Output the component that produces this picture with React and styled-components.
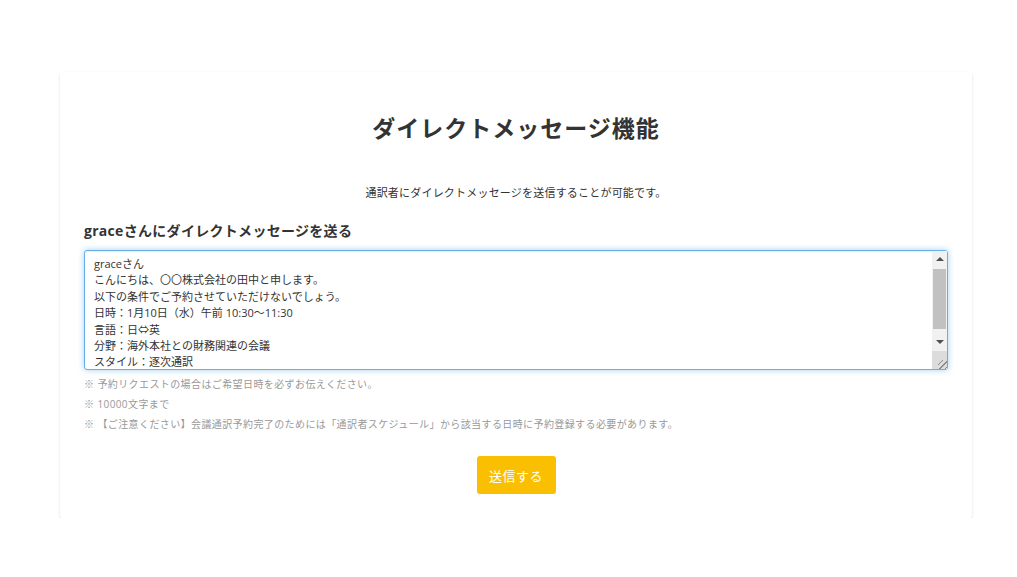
import styled, { createGlobalStyle } from "styled-components";

const GlobalStyle = createGlobalStyle`
  body {
    margin: 0;
    background: #fff;
    font-family: "Open Sans", "Noto Sans CJK JP", sans-serif;
    color: #333;
  }
`;

const message = `graceさん
こんにちは、〇〇株式会社の田中と申します。
以下の条件でご予約させていただけないでしょう。
日時：1月10日（水）午前 10:30〜11:30
言語：日⇔英
分野：海外本社との財務関連の会議
スタイル：逐次通訳
よろしくお願いいたします。

田中`;

const notes = [
  "※ 予約リクエストの場合はご希望日時を必ずお伝えください。",
  "※ 10000文字まで",
  "※ 【ご注意ください】会議通訳予約完了のためには「通訳者スケジュール」から該当する日時に予約登録する必要があります。",
];

const App = () => {
  return (
    <>
      <GlobalStyle />
      <Page>
        <Card>
          <Title>ダイレクトメッセージ機能</Title>
          <Lead>通訳者にダイレクトメッセージを送信することが可能です。</Lead>
          <Label>graceさんにダイレクトメッセージを送る</Label>
          <Field>
            <Message defaultValue={message} />
            {/* classic scrollbar drawn over the textarea */}
            <Scrollbar>
              <ArrowButton $dir="up" />
              <Track>
                <Thumb />
              </Track>
              <ArrowButton $dir="down" />
              <Grip />
            </Scrollbar>
          </Field>
          <Notes>
            {notes.map((n) => (
              <Note key={n}>{n}</Note>
            ))}
          </Notes>
          <Actions>
            <SendButton>送信する</SendButton>
          </Actions>
        </Card>
      </Page>
    </>
  );
};

const Page = styled.div`
  padding: 72px 45px 0 60px;
`;

const Card = styled.div`
  background: #fff;
  border-radius: 3px;
  box-shadow: 0 1px 3px rgba(0, 0, 0, 0.12);
  padding: 43px 24px 24px;
  display: flex;
  flex-direction: column;
`;

const Title = styled.h2`
  margin: 0;
  text-align: center;
  font-size: 23px;
  line-height: 26px;
  font-weight: 700;
  color: #333;
  letter-spacing: 1px;
`;

const Lead = styled.p`
  margin: 44px 0 0;
  text-align: center;
  font-size: 11px;
  line-height: 16px;
  color: #333;
  letter-spacing: 0.2px;
`;

const Label = styled.h3`
  margin: 20px 0 0;
  font-size: 14px;
  line-height: 20px;
  font-weight: 700;
  color: #333;
  letter-spacing: 0.3px;
`;

const Field = styled.div`
  position: relative;
  margin-top: 9px;
  height: 120px;
`;

const Message = styled.textarea`
  display: block;
  box-sizing: border-box;
  width: 100%;
  height: 120px;
  padding: 5px 24px 4px 9px;
  font-family: "Open Sans", "Noto Sans CJK JP", sans-serif;
  font-size: 11px;
  line-height: 16.4px;
  color: #333;
  border: 1px solid #66afe9;
  border-radius: 3px;
  outline: none;
  box-shadow: inset 0 1px 1px rgba(0, 0, 0, 0.075), 0 0 6px rgba(102, 175, 233, 0.6);
  resize: none;
  overflow: hidden;
`;

const Scrollbar = styled.div`
  position: absolute;
  top: 1px;
  right: 1px;
  bottom: 1px;
  width: 15px;
  display: flex;
  flex-direction: column;
  background: #f1f1f1;
`;

const ArrowButton = styled.div`
  height: ${(p) => (p.$dir === "up" ? "16px" : "18px")};
  display: flex;
  align-items: center;
  justify-content: center;
  &::before {
    content: "";
    width: 0;
    height: 0;
    border-left: 4px solid transparent;
    border-right: 4px solid transparent;
    ${(p) =>
      p.$dir === "up"
        ? "border-bottom: 4px solid #505050;"
        : "border-top: 4px solid #505050;"}
  }
`;

const Track = styled.div`
  flex: 1;
  padding: 2px 1px 0;
`;

const Thumb = styled.div`
  height: 60px;
  background: #c1c1c1;
`;

const Grip = styled.div`
  height: 18px;
  background:
    repeating-linear-gradient(
      135deg,
      transparent 0 3px,
      #8a8a8a 3px 4px
    ) right bottom / 9px 9px no-repeat,
    #dcdcdc;
`;

const Notes = styled.div`
  margin-top: 4px;
  display: flex;
  flex-direction: column;
`;

const Note = styled.p`
  margin: 0;
  font-size: 10px;
  line-height: 20px;
  color: #999;
  letter-spacing: 0.4px;
`;

const Actions = styled.div`
  margin-top: 22px;
  display: flex;
  justify-content: center;
`;

const SendButton = styled.button`
  width: 79px;
  height: 38px;
  border: none;
  border-radius: 3px;
  background: #f9bf00;
  color: #fff;
  font-family: "Open Sans", "Noto Sans CJK JP", sans-serif;
  font-size: 13px;
  letter-spacing: 0.5px;
  cursor: pointer;
`;

export default App;
